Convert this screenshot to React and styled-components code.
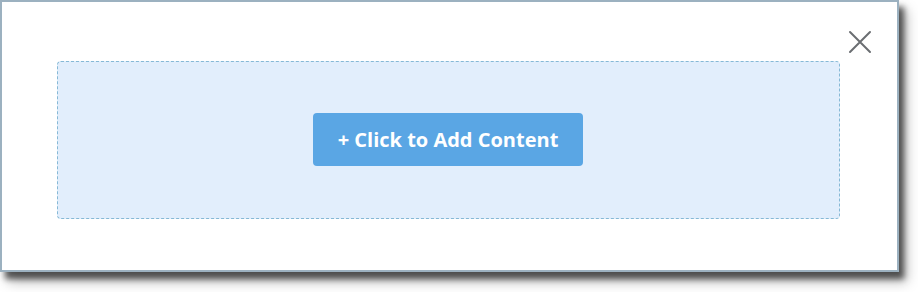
import styled, { createGlobalStyle } from 'styled-components';

const Global = createGlobalStyle`
  html, body {
    margin: 0;
    padding: 0;
    background: #ffffff;
  }
  body {
    font-family: 'Open Sans', 'Lato', sans-serif;
  }
`;

const Page = styled.div`
  min-height: 292px;
  padding-bottom: 20px;
  box-sizing: border-box;
`;

const Modal = styled.div`
  position: relative;
  box-sizing: border-box;
  width: 899px;
  height: 272px;
  border: 2px solid #9cb1c0;
  background: #ffffff;
  box-shadow: 5px 7px 6px rgba(0, 0, 0, 0.6), 8px 10px 12px rgba(0, 0, 0, 0.25);
  padding: 59px 0 0 55px;
`;

const CloseButton = styled.button`
  position: absolute;
  top: 27px;
  right: 24px;
  width: 26px;
  height: 26px;
  padding: 0;
  border: none;
  background: transparent;
  cursor: pointer;
  color: #6b6e72;
`;

const DropZone = styled.div`
  box-sizing: border-box;
  width: 783px;
  height: 158px;
  padding-bottom: 1px;
  border: 1px dashed #86b9d6;
  border-radius: 4px;
  background: #e2eefc;
  display: flex;
  align-items: center;
  justify-content: center;
`;

const AddButton = styled.button`
  width: 270px;
  height: 53px;
  margin-right: 1px;
  border: none;
  border-radius: 4px;
  background: #5aa6e4;
  color: #ffffff;
  font-family: 'Open Sans', 'Lato', sans-serif;
  font-weight: 700;
  font-size: 20px;
  cursor: pointer;
`;

const App = () => (
  <Page>
    <Global />
    <Modal>
      <CloseButton aria-label="Close">
        <svg width="26" height="26" viewBox="0 0 26 26" fill="none" stroke="currentColor" strokeWidth="2" strokeLinecap="round">
          <path d="M3 3 L23 23 M23 3 L3 23" />
        </svg>
      </CloseButton>
      <DropZone>
        <AddButton>+ Click to Add Content</AddButton>
      </DropZone>
    </Modal>
  </Page>
);

export default App;
